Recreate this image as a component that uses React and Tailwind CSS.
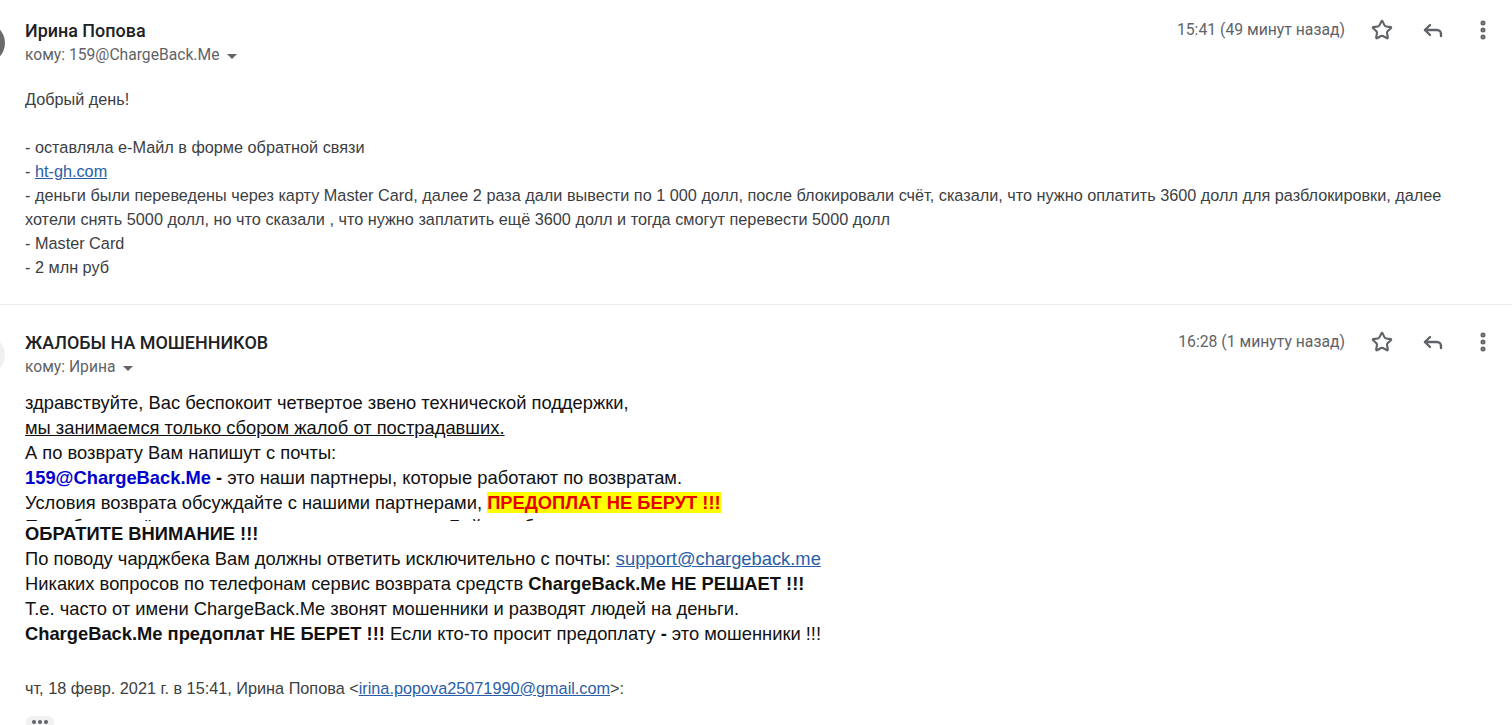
import React from "react";
import { Star, Reply, MoreVertical } from "lucide-react";

const Caret = () => (
  <svg width="10" height="5" viewBox="0 0 10 5" className="ml-[8px] mt-[2px]"><path d="M0 0h10L5 5z" fill="#5f6368" /></svg>
);

function Header({ name, to, time, avatar, pad }) {
  return (
    <div className={`relative flex items-start pl-[25px] ${pad}`}>
      <div className={`absolute left-[-35px] w-[40px] h-[40px] rounded-full ${avatar} top-[calc(100%-44px)]`} />
      <div className="flex-1">
        <div className="text-[17.95px] leading-[24px] text-[#202124] font-['Roboto',sans-serif] font-medium">{name}</div>
        <div className="flex items-center text-[15.67px] leading-[24px] text-[#5f6368] font-['Roboto',sans-serif]">
          {to}<Caret />
        </div>
      </div>
      <div className="flex items-center -mt-[1px] text-[#5f6368]">
        <span className="text-[15.75px] leading-[24px] font-['Roboto',sans-serif] mr-[26px]">{time}</span>
        <Star size={22} strokeWidth={2.3} className="mr-[28px]" />
        <Reply size={24} strokeWidth={2.4} className="mr-[26px]" />
        <MoreVertical size={24} strokeWidth={3} className="mr-[17px]" />
      </div>
    </div>
  );
}

export default function App() {
  return (
    <div className="bg-white w-[1512px] h-[725px] overflow-hidden font-['Liberation_Sans',Arial,sans-serif]">
      <Header pad="pt-[19px]" name="Ирина Попова" to="кому: 159@ChargeBack.Me" time="15:41 (49 минут назад)" avatar="bg-[#6b6b6b]" />
      <div className="pl-[25px] pr-[50px] pt-[20px] text-[16.25px] leading-[24px] text-[#3c4043]">
        <div>Добрый день!</div>
        <div className="h-[24px]" />
        <div>- оставляла е-Майл в форме обратной связи</div>
        <div>- <a className="text-[#2a5ea8] underline">ht-gh.com</a></div>
        <div>- деньги были переведены через карту Master Card, далее 2 раза дали вывести по 1 000 долл, после блокировали счёт, сказали, что нужно оплатить 3600 долл для разблокировки, далее хотели снять 5000 долл, но что сказали , что нужно заплатить ещё 3600 долл и тогда смогут перевести 5000 долл</div>
        <div>- Master Card</div>
        <div>- 2 млн руб</div>
      </div>
      <div className="mt-[25px] border-t border-[#e8eaed]" />
      <Header pad="pt-[26px]" name="ЖАЛОБЫ НА МОШЕННИКОВ" to="кому: Ирина" time="16:28 (1 минуту назад)" avatar="bg-[#f1f1f1]" />
      <div className="pl-[25px] pr-[50px] pt-[11px] text-[18.33px] leading-[25px] text-[#111]">
        <div>здравствуйте, Вас беспокоит четвертое звено технической поддержки,</div>
        <div className="underline">мы занимаемся только сбором жалоб от пострадавших.</div>
        <div>А по возврату Вам напишут с почты:</div>
        <div><b className="text-[#0000cd]">159@ChargeBack.Me</b> <b>-</b> это наши партнеры, которые работают по возвратам.</div>
        <div>Условия возврата обсуждайте с нашими партнерами, <b className="text-[#e60000] bg-[#ffff00]">ПРЕДОПЛАТ НЕ БЕРУТ !!!</b></div>
        <div className="h-[6px] leading-[24px] overflow-hidden">Пока будут всё решать, ответят только партнеры Бойтесь бесед</div>
        <div><b>ОБРАТИТЕ ВНИМАНИЕ !!!</b></div>
        <div>По поводу чарджбека Вам должны ответить исключительно с почты: <a className="text-[#2a5ea8] underline">support@chargeback.me</a></div>
        <div>Никаких вопросов по телефонам сервис возврата средств <b>ChargeBack.Me НЕ РЕШАЕТ !!!</b></div>
        <div>Т.е. часто от имени ChargeBack.Me звонят мошенники и разводят людей на деньги.</div>
        <div><b>ChargeBack.Me предоплат НЕ БЕРЕТ !!!</b> Если кто-то просит предоплату <b>-</b> это мошенники !!!</div>
      </div>
      <div className="pl-[25px] pt-[30px] text-[16.25px] leading-[24px] text-[#3c4043]">
        чт, 18 февр. 2021 г. в 15:41, Ирина Попова &lt;<a className="text-[#2a5ea8] underline">irina.popova25071990@gmail.com</a>&gt;:
      </div>
      <div className="ml-[26px] mt-[16px] w-[28px] h-[16px] rounded-[6px] bg-[#f1f1f1] flex items-start pt-[4px] justify-center gap-[2px]">
        <span className="w-[4px] h-[4px] rounded-full bg-[#5f6368]" />
        <span className="w-[4px] h-[4px] rounded-full bg-[#5f6368]" />
        <span className="w-[4px] h-[4px] rounded-full bg-[#5f6368]" />
      </div>
    </div>
  );
}
